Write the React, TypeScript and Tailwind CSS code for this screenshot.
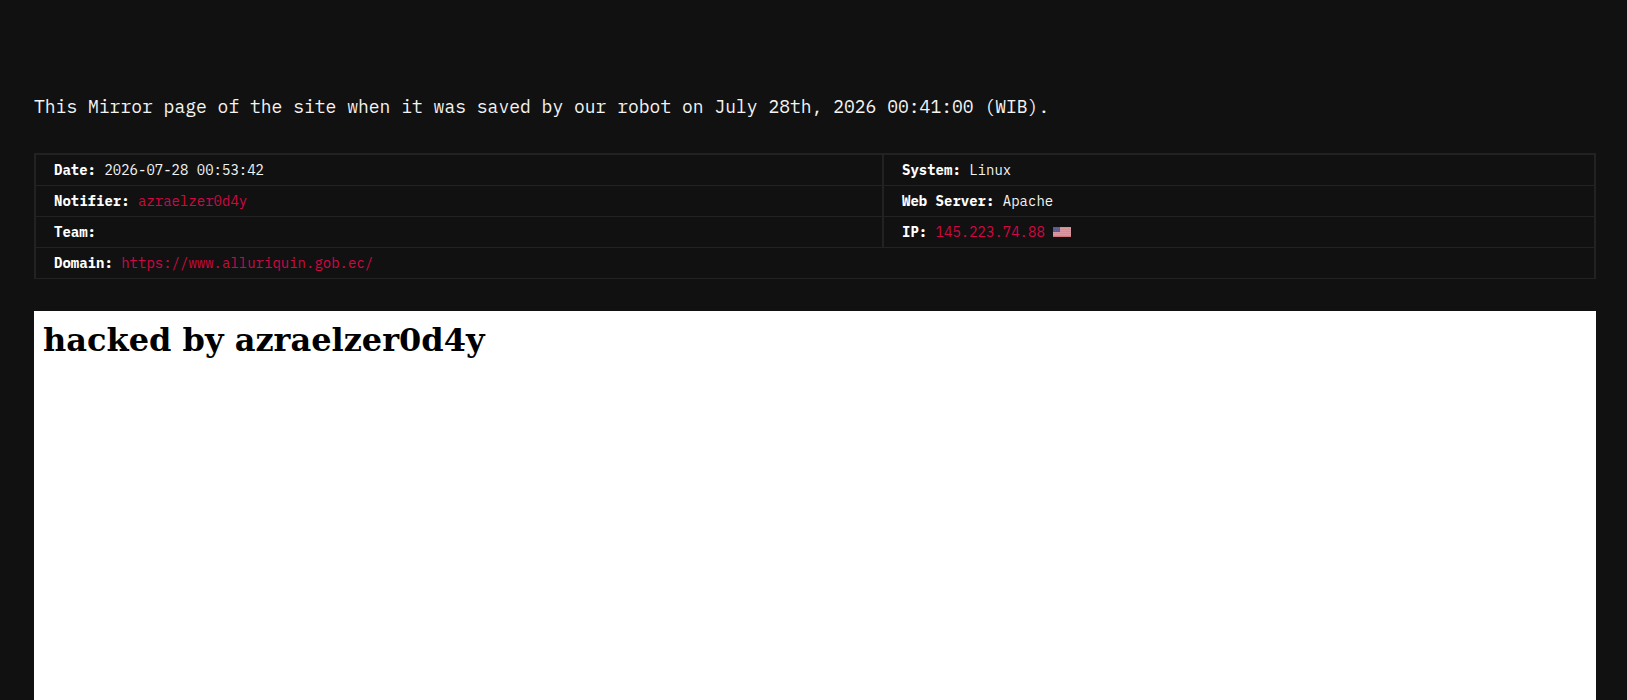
import type { ReactNode } from 'react'

const mirror = {
    savedAt: 'July 28th, 2026 00:41:00 (WIB)',
    date: '2026-07-28 00:53:42',
    notifier: 'azraelzer0d4y',
    system: 'Linux',
    server: 'Apache',
    ip: '145.223.74.88',
    domain: 'https://www.alluriquin.gob.ec/',
}

const UsFlag = () => (
    <svg viewBox="0 0 18 10" role="img" aria-label="United States" className="inline-block w-[18px] h-[10px] align-baseline" shapeRendering="crispEdges">
        <rect width="18" height="10" fill="#d98a94" />
        {[1, 3, 5, 7].map((y) => (
            <rect key={y} y={y} width="18" height="1" fill="#dc98a0" />
        ))}
        <rect y="9" width="18" height="1" fill="#cf7580" />
        <rect width="7" height="5" fill="#5a5a8c" />
        <path d="M1 1.5h1M3 1.5h1M5 1.5h1M2 3.5h1M4 3.5h1" stroke="#6c6c9c" strokeWidth="1" />
    </svg>
)

const Field = ({ label, right, span, children }: { label: string, right?: boolean, span?: number, children?: ReactNode }) => (
    <td colSpan={span} className={`h-[31px] px-[18px] py-0 align-middle border-b border-[#222] ${right ? 'border-l-2' : ''}`}>
        <strong className="font-bold text-white">{label}:</strong> {children}
    </td>
)

const Anchor = ({ href, children }: { href: string, children: ReactNode }) => (
    <a href={href} className="text-[#d00844] hover:text-white">{children}</a>
)

export default function App() {
    return (
        <main className="min-h-screen flex flex-col bg-[#111] text-[#f4f4f4] pl-[34px] pr-[31px] pt-[93px] font-['IBM_Plex_Mono','Liberation_Mono',monospace]">
            <p className="text-[18px] leading-7 mb-8">
                This Mirror page of the site when it was saved by our robot on {mirror.savedAt}.
            </p>

            <table className="w-full table-fixed border-separate border-spacing-0 border-t-2 border-x-2 border-[#222] text-sm leading-5 mb-8">
                <colgroup>
                    <col className="w-[54.3%]" />
                    <col />
                </colgroup>
                <tbody>
                    <tr>
                        <Field label="Date">{mirror.date}</Field>
                        <Field label="System" right>{mirror.system}</Field>
                    </tr>
                    <tr>
                        <Field label="Notifier"><Anchor href="#notifier">{mirror.notifier}</Anchor></Field>
                        <Field label="Web Server" right>{mirror.server}</Field>
                    </tr>
                    <tr>
                        <Field label="Team" />
                        <Field label="IP" right><Anchor href="#ip">{mirror.ip}</Anchor> <UsFlag /></Field>
                    </tr>
                    <tr>
                        <Field label="Domain" span={2}><Anchor href={mirror.domain}>{mirror.domain}</Anchor></Field>
                    </tr>
                </tbody>
            </table>

            <section className="flex-1 bg-white text-black p-[9px] font-['DejaVu_Serif',serif]">
                <h1 className="text-[32px] leading-10 font-bold">hacked by {mirror.notifier}</h1>
            </section>
        </main>
    )
}
